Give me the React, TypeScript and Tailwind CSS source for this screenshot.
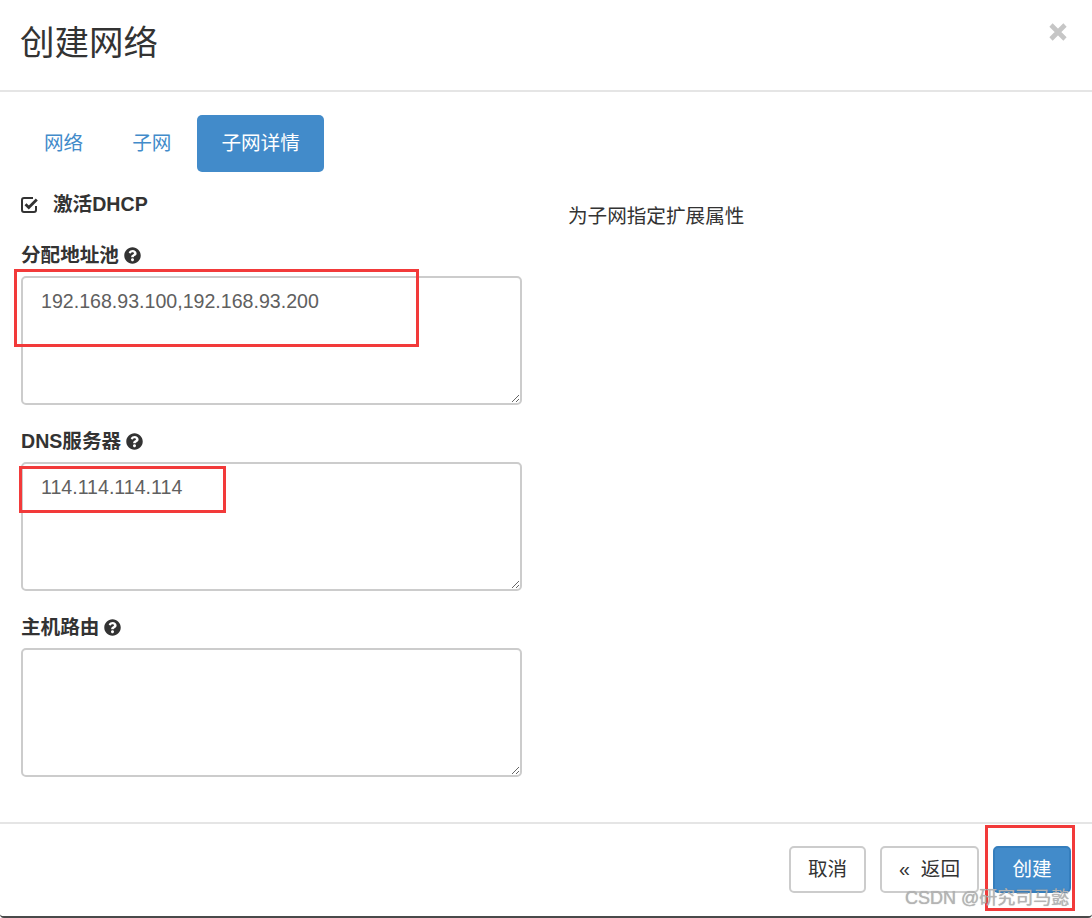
import React from 'react';
import { FaQuestionCircle } from 'react-icons/fa';

const font = { fontFamily: '"Liberation Sans", "Noto Sans CJK SC", sans-serif' };

const CheckSquare: React.FC = () => (
  <svg width="18" height="18" viewBox="0 0 18 18" fill="none" className="shrink-0">
    <path d="M15 10 V14 a2 2 0 0 1 -2 2 H3 a2 2 0 0 1 -2 -2 V4 a2 2 0 0 1 2 -2 H12" stroke="#333" strokeWidth="2" />
    <path d="M4.5 8.3 L7.8 11.6 L15.8 3.6" stroke="#333" strokeWidth="2.8" strokeLinejoin="miter" />
  </svg>
);

const FieldLabel: React.FC<{ text: string }> = ({ text }) => (
  <div className="flex items-center h-[27px] gap-[5px] text-[19.6px] font-bold text-[#333]">
    <span>{text}</span>
    <FaQuestionCircle className="w-[17px] h-[17px] text-[#333]" />
  </div>
);

const Field: React.FC<{ label: string; value?: string }> = ({ label, value = '' }) => (
  <div className="flex flex-col gap-[7px]">
    <FieldLabel text={label} />
    <textarea
      readOnly
      value={value}
      className="w-[501px] h-[129px] border-2 border-[#ccc] rounded-[5px] px-[18px] pt-[9px] text-[19.6px] leading-[28px] text-[#606060] outline-none resize-y"
      style={font}
    />
  </div>
);

export default function App() {
  return (
    <div className="relative w-[1092px] h-[918px] overflow-hidden bg-white" style={font}>
      <div className="flex flex-col h-full border-b-2 border-[#4a4a4a] rounded-b-[4px]">
        {/* Header */}
        <div className="h-[92px] flex items-start justify-between border-b-2 border-[#e5e5e5] pl-[20px] pr-[24px]">
          <h3 className="mt-[22px] text-[34.5px] leading-[42px] text-[#333] font-normal">创建网络</h3>
          <button className="mt-[22px]">
            <svg width="20" height="20" viewBox="0 0 20 20">
              <path d="M3 3 L17 17 M17 3 L3 17" stroke="#c6c6c6" strokeWidth="4.6" strokeLinecap="butt" />
            </svg>
          </button>
        </div>

        {/* Body */}
        <div className="flex-1 px-[21px] pt-[23px]">
          <div className="flex items-center gap-[3px] h-[57px] text-[19.6px]">
            <div className="px-[23px] h-full flex items-center text-[#428bca]">网络</div>
            <div className="px-[23px] h-full flex items-center text-[#428bca]">子网</div>
            <div className="px-[24px] h-full flex items-center rounded-[5px] bg-[#428bca] text-white">子网详情</div>
          </div>

          <div className="flex gap-[46px] mt-[19px]">
            <div className="flex flex-col w-[501px]">
              <div className="flex items-center h-[27px] gap-[14px] text-[19.6px] font-bold text-[#333]">
                <CheckSquare />
                <span>激活DHCP</span>
              </div>
              <div className="flex flex-col gap-[23px] mt-[24px]">
                <Field label="分配地址池" value="192.168.93.100,192.168.93.200" />
                <Field label="DNS服务器" value="114.114.114.114" />
                <Field label="主机路由" />
              </div>
            </div>
            <div className="mt-[12px] text-[19.6px] leading-[27px] text-[#333]">为子网指定扩展属性</div>
          </div>
        </div>

        {/* Footer */}
        <div className="h-[94px] border-t-2 border-[#e5e5e5] flex items-start justify-end gap-[14px] pt-[22px] pr-[21px]">
          <button className="h-[47px] w-[77px] border-2 border-[#ccc] rounded-[5px] text-[19.6px] text-[#333] bg-white">取消</button>
          <button className="h-[47px] w-[99px] border-2 border-[#ccc] rounded-[5px] text-[19.6px] text-[#333] bg-white">«&nbsp;&nbsp;返回</button>
          <button className="h-[47px] w-[78px] border-2 border-[#357ebd] rounded-[5px] text-[19.6px] text-white bg-[#428bca]">创建</button>
        </div>
      </div>

      {/* Red annotation boxes */}
      <div className="absolute left-[14px] top-[269px] w-[405px] h-[78px] border-[3px] border-[#f23a3a]" />
      <div className="absolute left-[19px] top-[466px] w-[207px] h-[47px] border-[3px] border-[#f23a3a]" />
      <div className="absolute left-[985px] top-[825px] w-[90px] h-[86px] border-[3px] border-[#f23a3a]" />

      {/* Watermark */}
      <div
        className="absolute left-[905px] top-[885px] text-[18px] leading-[26px] text-[#b4b4b4] whitespace-nowrap"
        style={{ textShadow: '0 0 1px rgba(120,120,120,0.6)' }}
      >
        CSDN @研究司马懿
      </div>
    </div>
  );
}
